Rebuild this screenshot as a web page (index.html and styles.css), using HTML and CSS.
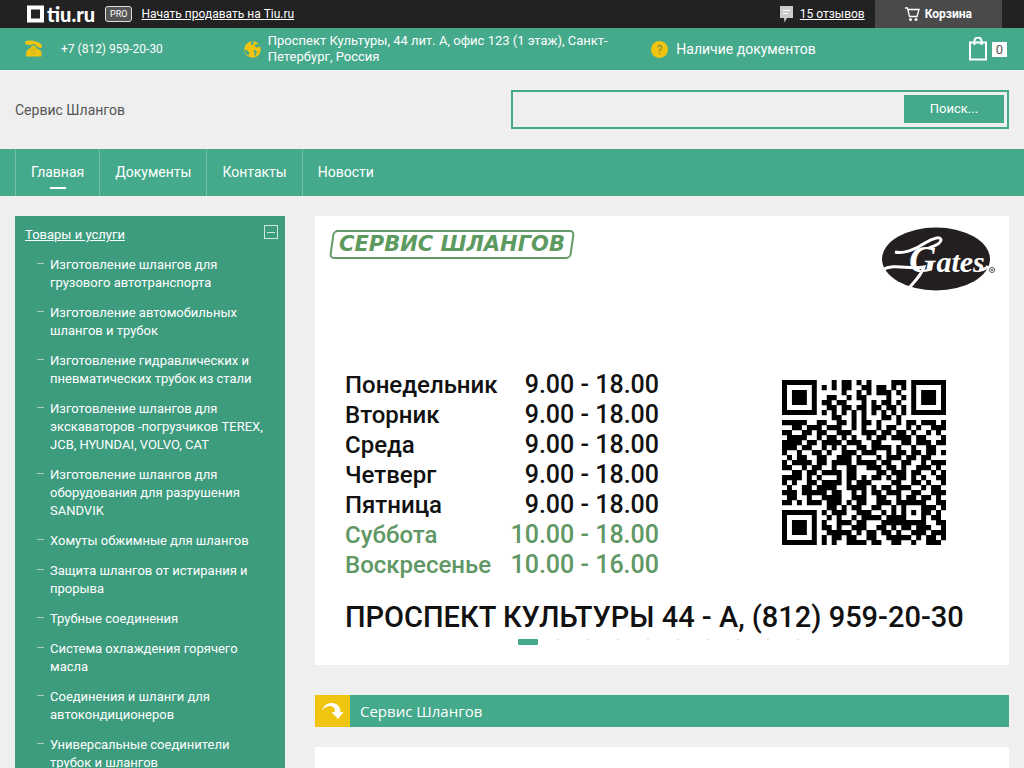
FILE: index.html
```html
<!DOCTYPE html>
<html lang="ru">
<head>
<meta charset="utf-8">
<title>Сервис Шлангов</title>
<link rel="stylesheet" href="styles.css">
</head>
<body>
<div class="topbar">
  <a class="brand" href="#">
    <svg width="17" height="18" viewBox="0 0 17 18" aria-hidden="true"><path d="M2 2.500h13v13H2z" fill="none" stroke="#fff" stroke-width="4"/></svg>
    <span class="brand-name">tiu.ru</span>
  </a>
  <span class="pro">PRO</span>
  <a class="sell" href="#">Начать продавать на Tiu.ru</a>
  <a class="reviews" href="#">
    <svg width="13" height="17" viewBox="0 0 13 17" aria-hidden="true"><path d="M0 0h13v12H7l-2.500 4.500L4 12H0z" fill="#ccc"/><path d="M3 4.500h7M3 7.500h5" stroke="#fff"/></svg>
    <span>15 отзывов</span>
  </a>
  <a class="cart" href="#">
    <svg width="15" height="15" viewBox="0 0 15 15" aria-hidden="true"><path d="M0 1h2.500l2 8.500h7.500l2-7H3" fill="none" stroke="#fff" stroke-width="1.300"/><circle cx="5.500" cy="12.500" r="1.500" fill="#fff"/><circle cx="11" cy="12.500" r="1.500" fill="#fff"/></svg>
    <span>Корзина</span>
  </a>
</div>

<div class="contacts">
  <div class="contact phone">
    <svg width="18" height="18" viewBox="0 0 18 18" aria-hidden="true"><path d="M0 2C2 .300 7 .200 11 1.500c3 1 6 2.500 6 4.500 0 1.500-.500 2-1.500 2L12 6.800c-.800-.500-.700-1.500-.700-2L7.500 4c-.500.800-1 1-2 1L1 4.500C.200 4 0 3 0 2z" fill="#f1c40f"/><path d="M7 5.500l3.500.500.500 2 4.500 2.500c1 1 1.300 4 .800 6H1.500C.800 14 1 11.500 2.500 10L6 7.500z" fill="#f1c40f"/><circle cx="8.300" cy="11.500" r="2.500" fill="none" stroke="#c9bf2c"/><circle cx="8.300" cy="11.500" r="1" fill="#c9bf2c"/></svg>
    <span>+7 (812) 959-20-30</span>
  </div>
  <div class="contact address">
    <svg width="17" height="17" viewBox="0 0 17 17" aria-hidden="true"><circle cx="8.500" cy="8.500" r="8.300" fill="#f1c40f"/><path d="M6 .500l1.500 1L6.500 3.500l2 .500L10 2l-1-1.500M10.500 5l1.500-2 3 .500 1 1.500-2 1.500-2-.500zM.300 8.500l3 1 2 2-.500 2L4.500 15 1.500 12zM9 9l3 .500 1 2-1.500 1.500.500 2.500-2-1.500.500-2.500z" fill="#44aa8b"/></svg>
    <span>Проспект Культуры, 44 лит. А, офис 123 (1 этаж), Санкт-Петербург, Россия</span>
  </div>
  <div class="contact docs">
    <svg width="17" height="17" viewBox="0 0 17 17" aria-hidden="true"><circle cx="8.500" cy="8.500" r="8.500" fill="#f1c40f"/><text x="8.500" y="13" text-anchor="middle" class="question">?</text></svg>
    <a href="#">Наличие документов</a>
  </div>
  <a class="bag" href="#">
    <svg width="18" height="24" viewBox="0 0 18 24" aria-hidden="true"><path d="M1 5.500h16v17H1zM5.500 8V4a3.500 3.500 0 0 1 7 0v4" fill="none" stroke="#fff" stroke-width="2"/></svg>
    <span class="bag-count">0</span>
  </a>
</div>

<header class="header">
  <span class="company">Сервис Шлангов</span>
  <form class="search">
    <input type="text" aria-label="Поиск">
    <button type="button">Поиск...</button>
  </form>
</header>

<nav class="nav">
  <a class="active" href="#">Главная</a>
  <a href="#">Документы</a>
  <a href="#">Контакты</a>
  <a href="#">Новости</a>
</nav>

<div class="layout">
  <aside class="sidebar">
    <div class="sidebar-head">
      <a href="#">Товары и услуги</a>
      <button class="toggle" type="button" aria-label="Свернуть"></button>
    </div>
    <ul class="catalog">
      <li><a href="#">Изготовление шлангов для грузового автотранспорта</a></li>
      <li><a href="#">Изготовление автомобильных шлангов и трубок</a></li>
      <li><a href="#">Изготовление гидравлических и пневматических трубок из стали</a></li>
      <li><a href="#">Изготовление шлангов для экскаваторов -погрузчиков TEREX, JCB, HYUNDAI, VOLVO, CAT</a></li>
      <li><a href="#">Изготовление шлангов для оборудования для разрушения SANDVIK</a></li>
      <li><a href="#">Хомуты обжимные для шлангов</a></li>
      <li><a href="#">Защита шлангов от истирания и прорыва</a></li>
      <li><a href="#">Трубные соединения</a></li>
      <li><a href="#">Система охлаждения горячего масла</a></li>
      <li><a href="#">Соединения и шланги для автокондиционеров</a></li>
      <li><a href="#">Универсальные соединители трубок и шлангов</a></li>
    </ul>
  </aside>

  <main class="main">
    <section class="banner">
      <div class="banner-top">
        <span class="plate">СЕРВИС ШЛАНГОВ</span>
        <svg class="gates" width="114" height="64" viewBox="0 0 114 64" role="img" aria-label="Gates">
          <ellipse cx="55" cy="32" rx="54" ry="31.500" fill="#231f20"/>
          <path d="M1 43c12-7 27 0 42-3C40 49 33 55 27 62M14 25c8 2 20-2 30-9 8-5 16-7 16-3 0 3-6 6-12 8M98 43c4 0 7-1 9-4" fill="none" stroke="#fff" stroke-width="3"/>
          <text x="28" y="45" class="gates-name"><tspan class="gates-initial">G</tspan>ates</text>
          <circle cx="111" cy="43" r="2.500" fill="none" stroke="#555"/><circle cx="111" cy="43" r="1" fill="#555"/>
        </svg>
      </div>
      <div class="banner-middle">
        <table class="hours">
          <tr><th scope="row">Понедельник</th><td>9.00 - 18.00</td></tr>
          <tr><th scope="row">Вторник</th><td>9.00 - 18.00</td></tr>
          <tr><th scope="row">Среда</th><td>9.00 - 18.00</td></tr>
          <tr><th scope="row">Четверг</th><td>9.00 - 18.00</td></tr>
          <tr><th scope="row">Пятница</th><td>9.00 - 18.00</td></tr>
          <tr class="weekend"><th scope="row">Суббота</th><td>10.00 - 18.00</td></tr>
          <tr class="weekend"><th scope="row">Воскресенье</th><td>10.00 - 16.00</td></tr>
        </table>
        <svg class="qr" id="qr" width="164" height="165" viewBox="0 0 33 33" preserveAspectRatio="none" role="img" aria-label="QR-код"></svg>
      </div>
      <p class="banner-address">ПРОСПЕКТ КУЛЬТУРЫ 44 - А, (812) 959-20-30</p>
      <div class="pager"><i class="current"></i><i></i><i></i><i></i><i></i><i></i><i></i><i></i><i></i><i></i></div>
    </section>

    <h1 class="section-title">
      <span class="section-icon"><svg width="22" height="17" viewBox="0 0 22 17" aria-hidden="true"><path d="M0 7C3-2 18-3 18.500 9H21.500L16 16 9.500 9H13C13 2 6 1 0 7z" fill="#fff"/></svg></span>
      <span>Сервис Шлангов</span>
    </h1>
    <section class="content"></section>
  </main>
</div>
<script src="qr.js"></script>
</body>
</html>
```
FILE: styles.css
```css
* { box-sizing: border-box; }
body {
  margin: 0;
  height: 100vh;
  overflow: hidden;
  background: #efefef;
  color: #fff;
  font: 13px/16px Roboto, "Liberation Sans", sans-serif;
}
a { color: inherit; text-decoration: none; }

.topbar { display: flex; align-items: center; height: 28px; padding: 0 22px 0 27px; background: #222; font-size: 12px; }
.brand { display: flex; align-items: center; gap: 3px; }
.brand-name { font: 900 20px/24px Lato, sans-serif; }
.pro { margin-left: 10px; padding: 0 4px; border: 1px solid #ddd; border-radius: 3px; background: #555; font-size: 9px; line-height: 14px; }
.sell { margin-left: 9px; text-decoration: underline; }
.reviews { display: flex; align-items: center; gap: 7px; margin-left: auto; }
.reviews span { text-decoration: underline; }
.cart { display: flex; align-items: center; gap: 5px; height: 100%; margin-left: 10px; padding: 0 30px; background: #4a4a4a; font-weight: 700; }

.contacts { display: grid; grid-template-columns: 219fr 408fr 318fr auto; align-items: center; height: 42px; padding: 0 17px 0 25px; background: #44aa8b; }
.contact { display: flex; align-items: center; }
.contact svg { flex: none; }
.phone { gap: 18px; font-size: 12px; }
.address { gap: 7px; padding-right: 36px; }
.docs { gap: 8px; font-size: 14px; }
.question { font-size: 12px; fill: #7a8a45; }
.bag { display: flex; align-items: center; gap: 5px; }
.bag-count { width: 15px; background: #fff; color: #555; line-height: 15px; text-align: center; }

.header { display: flex; align-items: center; justify-content: space-between; height: 79px; padding: 0 15px; }
.company { color: #555; font-size: 14px; }
.search { display: flex; flex: 0 1 498px; height: 39px; padding: 3px; border: 2px solid #44aa8b; }
.search input { flex: 1; min-width: 0; border: 0; background: none; outline: 0; font: inherit; }
.search button { width: 100px; height: 28px; border: 0; background: #44aa8b; color: #fff; font: inherit; }

.nav { display: flex; height: 47px; padding: 0 15px; background: #44aa8b; font-size: 14px; line-height: 46px; }
.nav a { padding: 0 15px; border-left: 1px solid #75bfa8; }
.nav .active { background: linear-gradient(#fff, #fff) center 38px / 16px 2px no-repeat; }

.layout { display: flex; gap: 30px; padding: 20px 15px 0; }
.sidebar { flex: none; width: 270px; padding: 9px 7px 20px 10px; background: #3d9b7e; line-height: 18px; }
.sidebar-head { display: flex; justify-content: space-between; align-items: flex-start; }
.sidebar-head a { padding-top: 1px; text-decoration: underline; }
.toggle { width: 14px; height: 14px; padding: 0; border: 1px solid #cfe8df; background: linear-gradient(#cfe8df, #cfe8df) center / 8px 1px no-repeat; }
.catalog { display: grid; gap: 12px; margin: 12px 0 0; padding: 0; list-style: none; }
.catalog li { padding: 0 10px 0 25px; background: linear-gradient(#a5d2c4, #a5d2c4) 12px 7px / 7px 1px no-repeat; }

.main { flex: 1; min-width: 0; }
.banner { height: 449px; padding: 11px 14px 0 15px; background: #fff; color: #111; }
.banner-top { display: flex; justify-content: space-between; align-items: flex-start; }
.plate { position: relative; margin-top: 3px; padding: 2px 9px; color: #5d9a60; font: italic 700 21px/25px "DejaVu Sans", sans-serif; }
.plate::before { content: ""; position: absolute; inset: 0 1px; border: 2px solid #669968; border-radius: 5px; transform: skewX(-8deg); }
.gates-name { font: italic 700 30px "Liberation Serif", serif; fill: #fff; }
.gates-initial { font-size: 38px; }
.banner-middle { display: flex; justify-content: space-between; margin-top: 79px; padding: 0 49px 0 15px; }
.hours { border-collapse: collapse; width: 314px; font-size: 25px; line-height: 30px; }
.hours th, .hours td { padding: 0; font-weight: 500; text-align: left; }
.hours th { font-size: 24px; }
.hours td { text-align: right; }
.weekend { color: #5f9864; }
.qr { margin-top: 10px; }
.banner-address { margin: 20px 15px 0; font-size: 29px; font-weight: 500; line-height: 34px; white-space: nowrap; }
.pager { display: flex; justify-content: center; gap: 10px; margin-top: 5px; }
.pager i { width: 20px; height: 6px; background: linear-gradient(#ddd, #ddd) center top / 2px 1px no-repeat; }
.pager .current { border-radius: 1px; background: #44aa8b; }

.section-title { display: flex; align-items: center; gap: 10px; height: 32px; margin: 30px 0 20px; background: #44aa8b; font: 400 15px/32px "Open Sans", sans-serif; }
.section-icon { display: grid; place-items: center; width: 35px; height: 32px; background: #f1c40f; }
.content { height: 200px; background: #fff; }
```
FILE: qr.js
```js
const rows = [
  "111111100010110101000011110011111",
  "100000101010110011011010110010001",
  "101110100000100101011101001010101",
  "101110100110010110000100110010111",
  "101110101101100010101101010010001",
  "100000100110110110110110110010001",
  "111111101010101010101010101011111",
  "000000000011001010001101000000000",
  "111110011001101011010001011011101",
  "001101110111001010010110010100111",
  "110011011001110011101101101001010",
  "011110010110101001011011110110001",
  "111101101111011100110000110111011",
  "111011001010100110111101001001100",
  "100100110100111011100101101101101",
  "010110011001110100010111011011000",
  "101111011011110111101100110010111",
  "110010110010011001110110100111010",
  "001101101111011000011011101100101",
  "111101010001011010110101101010011",
  "101001101111010111000011001101001",
  "010011011110011110101101110010110",
  "111011111011001010110111001100111",
  "011001001111001110011001011011010",
  "110101110111010110011101111110011",
  "000000000110101100110010100011101",
  "111111101011100111001010101011010",
  "100000100101001011110111100010110",
  "101110101001110110001111111110011",
  "101110101101001110011010110111001",
  "101110100111110101101101001110111",
  "100000101011011001100111110101101",
  "111111101010011110110011001001110"
];
const inFinder = (x, y) => x < 8 && y < 8 || x > 24 && y < 8 || x < 8 && y > 24;
let d = "";
rows.forEach((row, y) => {
  for (const run of row.matchAll(/1+/g)) {
    let start = run.index;
    let end = start + run[0].length;
    while (start < end && inFinder(start, y)) start++;
    while (end > start && inFinder(end - 1, y)) end--;
    if (end > start) d += `M${start} ${y}H${end}v1.05H${start}z`;
  }
});
const eyes = [[0, 0], [26, 0], [0, 26]].map(([x, y]) =>
  `M${x} ${y}h7v7h-7zM${x + 1} ${y + 1}v5h5v-5zM${x + 2} ${y + 2}h3v3h-3z`).join("");
[d, eyes].forEach(shape => {
  const path = document.createElementNS("http://www.w3.org/2000/svg", "path");
  path.setAttribute("d", shape);
  document.getElementById("qr").append(path);
});
```
